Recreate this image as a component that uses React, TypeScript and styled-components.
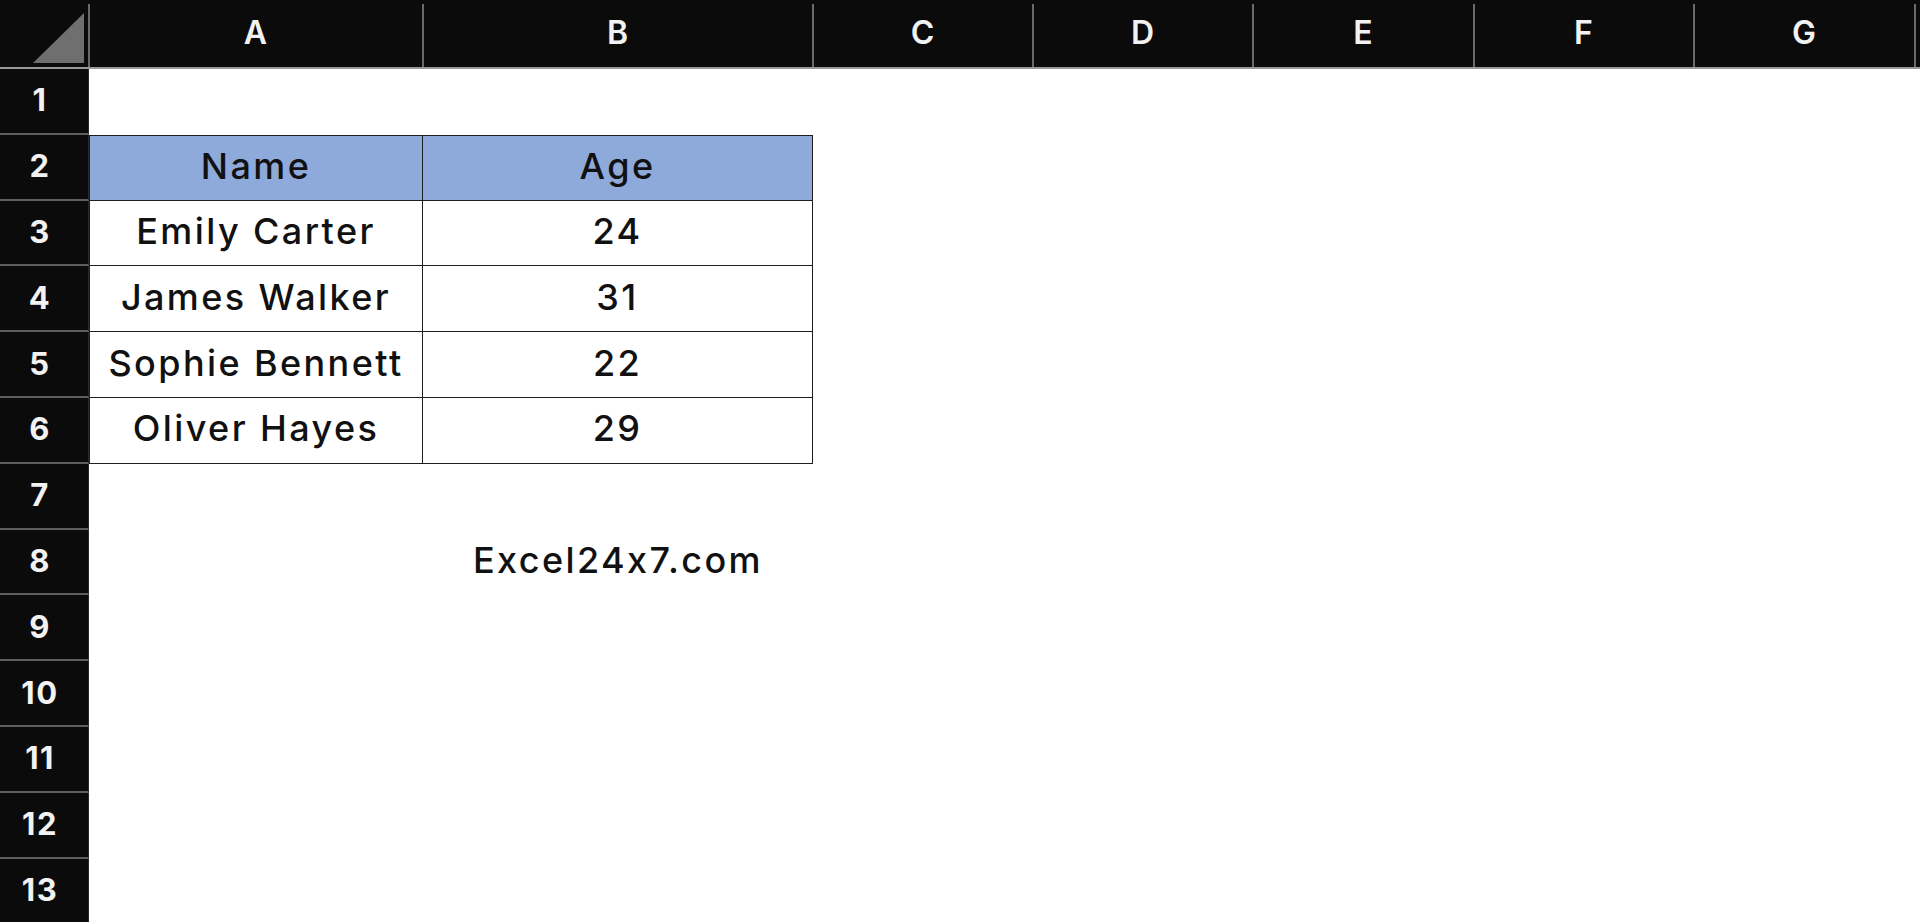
import React from "react";
import styled, { createGlobalStyle } from "styled-components";

const GlobalStyle = createGlobalStyle`
  html, body {
    margin: 0;
    padding: 0;
    background: #ffffff;
    overflow: hidden;
  }
  * { box-sizing: border-box; }
`;

const COLS = ["A", "B", "C", "D", "E", "F", "G", ""];
const COL_WIDTHS = [334, 390, 220, 220, 221, 220, 221];
const ROW_H = 65.8;

const Sheet = styled.div`
  display: grid;
  grid-template-columns: 89px ${COL_WIDTHS.map((w) => `${w}px`).join(" ")} 1fr;
  grid-template-rows: 69px repeat(13, ${ROW_H}px);
  width: 1920px;
  height: 922px;
  overflow: hidden;
  background: #ffffff;
  font-family: Inter, "Noto Sans", sans-serif;
`;

const Corner = styled.div`
  position: relative;
  background: #0b0b0b;
  border-bottom: 2px solid #9a9a9a;
  &::after {
    content: "";
    position: absolute;
    left: 33px;
    top: 13px;
    width: 51px;
    height: 50px;
    background: #6f6f6f;
    clip-path: polygon(100% 0, 100% 100%, 0 100%);
  }
`;

const ColHeader = styled.div`
  position: relative;
  display: flex;
  align-items: center;
  justify-content: center;
  background: #0b0b0b;
  color: #f2f2f2;
  font-size: 32px;
  font-weight: 600;
  letter-spacing: 1px;
  padding-bottom: 3px;
  border-bottom: 2px solid #9a9a9a;
  &::before {
    content: "";
    position: absolute;
    left: -1px;
    top: 4px;
    bottom: 0;
    width: 2px;
    background: #6a6a6a;
  }
`;

const RowHeader = styled.div`
  display: flex;
  align-items: center;
  justify-content: center;
  padding-right: 8px;
  padding-bottom: 2px;
  background: #0b0b0b;
  color: #f2f2f2;
  font-size: 31px;
  font-weight: 700;
  letter-spacing: 1.5px;
  border-bottom: 2px solid #5e5e5e;
  border-right: 1px solid #2a2a2a;
`;

const Cell = styled.div<{
  $fill?: boolean;
  $top?: boolean;
  $left?: boolean;
  $boxed?: boolean;
}>`
  display: flex;
  align-items: center;
  justify-content: center;
  padding-bottom: 4px;
  font-size: 36px;
  font-weight: 500;
  letter-spacing: 2.4px;
  color: #111111;
  white-space: nowrap;
  background: ${(p) => (p.$fill ? "#8eaadb" : "#ffffff")};
  border-right: ${(p) => (p.$boxed ? "1.5px solid #1e1e1e" : "none")};
  border-bottom: ${(p) => (p.$boxed ? "1.5px solid #1e1e1e" : "none")};
  border-top: ${(p) => (p.$top ? "1.5px solid #1e1e1e" : "none")};
  border-left: ${(p) => (p.$left ? "1px solid #1e1e1e" : "none")};
`;

type Row = (string | null)[];

const data: Record<number, Row> = {
  2: ["Name", "Age"],
  3: ["Emily Carter", "24"],
  4: ["James Walker", "31"],
  5: ["Sophie Bennett", "22"],
  6: ["Oliver Hayes", "29"],
  8: [null, "Excel24x7.com"],
};

export default function App() {
  const rows = Array.from({ length: 13 }, (_, i) => i + 1);
  return (
    <>
      <GlobalStyle />
      <Sheet>
        <Corner />
        {COLS.map((c, i) => (
          <ColHeader key={`h${i}`}>{c}</ColHeader>
        ))}
        {rows.map((r) => {
          const rowData = data[r] || [];
          const inTable = r >= 2 && r <= 6;
          return (
            <React.Fragment key={r}>
              <RowHeader>{r}</RowHeader>
              {COLS.map((_, ci) => {
                const boxed = inTable && ci < 2;
                return (
                  <Cell
                    key={`${r}-${ci}`}
                    $boxed={boxed}
                    $fill={r === 2 && ci < 2}
                    $top={r === 2 && ci < 2}
                    $left={boxed && ci === 0}
                  >
                    {rowData[ci] ?? ""}
                  </Cell>
                );
              })}
            </React.Fragment>
          );
        })}
      </Sheet>
    </>
  );
}
